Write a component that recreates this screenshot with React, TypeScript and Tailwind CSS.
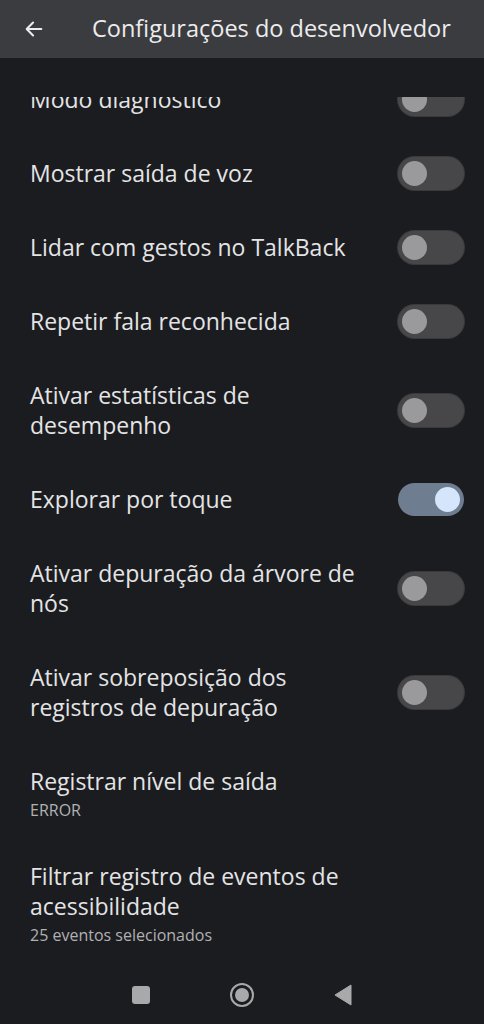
import React from 'react'

interface SettingItem {
  title: string
  summary?: string
  toggle?: boolean
  checked?: boolean
}

const items: SettingItem[] = [
  { title: 'Modo diagnóstico', toggle: true },
  { title: 'Mostrar saída de voz', toggle: true },
  { title: 'Lidar com gestos no TalkBack', toggle: true },
  { title: 'Repetir fala reconhecida', toggle: true },
  { title: 'Ativar estatísticas de desempenho', toggle: true },
  { title: 'Explorar por toque', toggle: true, checked: true },
  { title: 'Ativar depuração da árvore de nós', toggle: true },
  { title: 'Ativar sobreposição dos registros de depuração', toggle: true },
  { title: 'Registrar nível de saída', summary: 'ERROR' },
  { title: 'Filtrar registro de eventos de acessibilidade', summary: '25 eventos selecionados' },
]

function Toggle({ checked }: { checked?: boolean }) {
  return (
    <div
      className={`flex h-[33px] w-[66px] shrink-0 items-center rounded-full px-[4px] ${
        checked ? 'justify-end bg-[#6e7d90]' : 'justify-start bg-[#47474a] ring-1 ring-[#3a3a3d]'
      }`}
    >
      <div className={`h-[25px] w-[25px] rounded-full ${checked ? 'bg-[#d5e5fb]' : 'bg-[#9a9a9d]'}`} />
    </div>
  )
}

function Row({ item }: { item: SettingItem }) {
  return (
    <div className="flex items-center gap-[34px] pl-[30px] pr-[20px]">
      <div className={`min-w-0 flex-1 pt-[22px] ${item.summary ? 'pb-[18px]' : 'pb-[22px]'}`}>
        <div className="text-[23px] leading-[30px] text-[#e4e4e6]">{item.title}</div>
        {item.summary && <div className="mt-[3px] text-[16px] leading-[22px] text-[#b1b1b4]">{item.summary}</div>}
      </div>
      {item.toggle && <Toggle checked={item.checked} />}
    </div>
  )
}

export default function App() {
  return (
    <div className="flex h-[1024px] w-[484px] flex-col overflow-hidden bg-[#1b1c1f]" style={{ fontFamily: '"Open Sans", Roboto, sans-serif' }}>
      <div className="flex h-[58px] shrink-0 items-center bg-[#3b3c3f]">
        <div className="flex w-[92px] justify-start pl-[23px]">
          <svg width="22" height="22" viewBox="0 0 24 24" fill="none">
            <path d="M20 12H5M11 5l-7 7 7 7" stroke="#ededee" strokeWidth="2.2" strokeLinecap="round" strokeLinejoin="round" />
          </svg>
        </div>
        <div className="text-[23.5px] text-[#ececee]">Configurações do desenvolvedor</div>
      </div>
      <div className="h-[39px] shrink-0" />
      <div className="flex-1 overflow-hidden">
        <div className="mt-[-35px]">
          {items.map(it => (
            <Row key={it.title} item={it} />
          ))}
        </div>
      </div>
      <div className="flex h-[58px] shrink-0 items-center justify-center gap-[80px]">
        <div className="h-[18px] w-[18px] rounded-[3px] bg-[#a9a9ac]" />
        <div className="flex h-[24px] w-[24px] items-center justify-center rounded-full border-[2.5px] border-[#a9a9ac]">
          <div className="h-[14px] w-[14px] rounded-full bg-[#a9a9ac]" />
        </div>
        <svg width="18" height="22" viewBox="0 0 18 22">
          <path d="M17 1L1 11l16 10z" fill="#a9a9ac" stroke="#a9a9ac" strokeWidth="1" strokeLinejoin="round" />
        </svg>
      </div>
    </div>
  )
}
